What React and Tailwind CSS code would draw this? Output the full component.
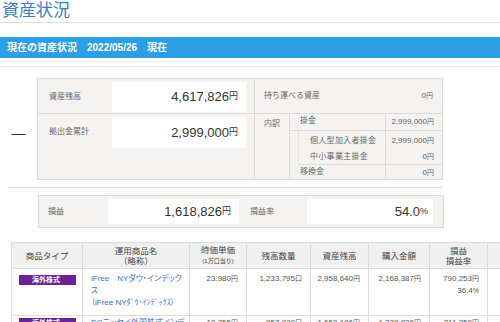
export default function App() {
  const font = "font-['Liberation_Sans','Noto_Sans_CJK_JP',sans-serif]";
  const yen = (v, size = "text-[9px]") => (
    <>
      {v}
      <span className={size}>円</span>
    </>
  );

  return (
    <div className={`w-[500px] h-[322px] overflow-hidden bg-white text-[#555] ${font}`}>
      {/* title */}
      <h1 className="pl-[2px] pt-[1px] h-[23px] text-[17px] leading-[20px] text-[#3a7fc0] border-b border-[#dcdcdc]">
        資産状況
      </h1>

      {/* blue bar */}
      <div className="mt-[14px] h-[21px] bg-[#2d9fe6] pl-[7px] flex items-center text-white text-[10px] font-bold">
        現在の資産状況　2022/05/26　現在
      </div>
      <div className="mt-[8px] h-px bg-[#e6e6e6]" />

      {/* balance summary */}
      <div className="mt-[11px] flex">
        <div className="w-[37px] flex items-center justify-center pt-[8px] text-[14px] text-[#333]">—</div>
        <div className="w-[406px] border border-[#d9d9d9] bg-[#f4f3f1] flex">
          <div className="w-[217px] border-r border-[#dcdcdc]">
            <div className="h-[35px] flex border-b border-[#dcdcdc]">
              <div className="w-[74px] pl-[11px] pt-[13px] text-[8px] leading-[10px] text-[#666]">資産残高</div>
              <div className="mt-[3px] h-[30px] w-[134px] bg-white flex items-center justify-end pr-[8px] text-[13px] text-[#333]">
                {yen("4,617,826")}
              </div>
            </div>
            <div className="h-[65px] flex">
              <div className="w-[74px] pl-[11px] pt-[13px] text-[8px] leading-[10px] text-[#666]">拠出金累計</div>
              <div className="mt-[3px] h-[31px] w-[134px] bg-white flex items-center justify-end pr-[8px] text-[13px] text-[#333]">
                {yen("2,999,000")}
              </div>
            </div>
          </div>
          <div className="flex-1 text-[8px] text-[#666]">
            <div className="h-[35px] flex items-center justify-between px-[9px] border-b border-[#dcdcdc]">
              <span>持ち運べる資産</span>
              <span>{yen("0", "text-[7px]")}</span>
            </div>
            <div className="h-[65px] flex">
              <div className="w-[35px] border-r border-[#dcdcdc] text-center pt-[4px] leading-[12px]">内訳</div>
              <div className="flex-1 flex flex-col leading-[12px]">
                <div className="h-[17px] flex border-b border-[#dcdcdc]">
                  <span className="flex-1 pl-[10px] pt-[1px]">掛金</span>
                  <span className="w-[57px] border-l border-[#dcdcdc] text-right pr-[8px] pt-[2px]">{yen("2,999,000", "text-[7px]")}</span>
                </div>
                <div className="h-[34px] ml-[8px] border-l border-[#e2e2e2] flex flex-col border-b border-b-[#dcdcdc]">
                  <div className="h-[18px] flex">
                    <span className="flex-1 whitespace-nowrap pl-[11px] pt-[4px] text-[8px] tracking-[0.3px]">個人型加入者掛金</span>
                    <span className="w-[57px] border-l border-[#dcdcdc] text-right pr-[8px] pt-[4px]">{yen("2,999,000", "text-[7px]")}</span>
                  </div>
                  <div className="h-[15px] flex">
                    <span className="flex-1 whitespace-nowrap pl-[11px] pt-[2px] text-[8px] tracking-[0.3px]">中小事業主掛金</span>
                    <span className="w-[57px] border-l border-[#dcdcdc] text-right pr-[8px] pt-[2px]">{yen("0", "text-[7px]")}</span>
                  </div>
                </div>
                <div className="flex-1 flex">
                  <span className="flex-1 pl-[10px] pt-[1px]">移換金</span>
                  <span className="w-[57px] border-l border-[#dcdcdc] text-right pr-[8px] pt-[2px]">{yen("0", "text-[7px]")}</span>
                </div>
              </div>
            </div>
          </div>
        </div>
      </div>
      <div className="ml-[8px] mt-[7px] w-[435px] h-px bg-[#dcdcdc]" />

      {/* profit */}
      <div className="ml-[38px] mt-[7px] w-[406px] h-[33px] border border-[#d9d9d9] bg-[#f4f3f1] flex items-center">
        <div className="w-[69px] pl-[9px] text-[8px] text-[#666]">損益</div>
        <div className="w-[131px] h-[25px] bg-white flex items-center justify-end pr-[8px] text-[13px] text-[#333]">
          {yen("1,618,826")}
        </div>
        <div className="w-[68px] pl-[11px] text-[8px] text-[#666]">損益率</div>
        <div className="w-[126px] h-[25px] bg-white flex items-center justify-end pr-[5px] text-[13px] text-[#333]">
          54.0<span className="text-[9px]">%</span>
        </div>
      </div>

      {/* holdings table */}
      <table className="ml-[11px] mt-[14px] w-[536px] table-fixed border-collapse text-[8px] leading-[12px]">
        <colgroup>
          <col className="w-[71px]" />
          <col className="w-[107px]" />
          <col className="w-[57px]" />
          <col className="w-[64px]" />
          <col className="w-[58px]" />
          <col className="w-[61px]" />
          <col className="w-[58px]" />
          <col className="w-[60px]" />
        </colgroup>
        <thead>
          <tr className="h-[26px] bg-[#f0f0f0] text-[#444] text-[8.5px]">
            <th className="border border-[#dcdcdc] font-normal">商品タイプ</th>
            <th className="border border-[#dcdcdc] font-normal leading-[10px]">
              運用商品名
              <br />（略称）
            </th>
            <th className="border border-[#dcdcdc] font-normal leading-[10px]">
              時価単価
              <br />
              <span className="text-[6px]">(1万口当り)</span>
            </th>
            <th className="border border-[#dcdcdc] font-normal">残高数量</th>
            <th className="border border-[#dcdcdc] font-normal">資産残高</th>
            <th className="border border-[#dcdcdc] font-normal">購入金額</th>
            <th className="border border-[#dcdcdc] font-normal leading-[10px]">
              損益
              <br />
              損益率
            </th>
            <th className="border border-[#dcdcdc] font-normal"></th>
          </tr>
        </thead>
        <tbody>
          <tr className="h-[47px] align-top">
            <td className="border border-[#dcdcdc] pl-[7px] pt-[6px]">
              <div className="w-[57px] h-[10px] bg-[#6a2497] text-white text-[7px] leading-[10px] font-bold pl-[13px]">海外株式</div>
            </td>
            <td className="border border-[#dcdcdc] pl-[8px] pr-[4px] pt-[4px] text-[#3f6fc6] text-[8px] [font-feature-settings:'palt']">
              iFree　NYダウ・インデックス
              <br />
              <span className="whitespace-nowrap">（iFree NYﾀﾞｳ･ｲﾝﾃﾞｯｸｽ）</span>
            </td>
            <td className="border border-[#dcdcdc] text-right pr-[8px] pt-[4px]">{yen("23,980", "text-[7px]")}</td>
            <td className="border border-[#dcdcdc] text-right pr-[8px] pt-[4px]">
              1,233,795<span className="text-[7px]">口</span>
            </td>
            <td className="border border-[#dcdcdc] text-right pr-[8px] pt-[4px]">{yen("2,958,640", "text-[7px]")}</td>
            <td className="border border-[#dcdcdc] text-right pr-[8px] pt-[4px]">{yen("2,168,387", "text-[7px]")}</td>
            <td className="border border-[#dcdcdc] text-right pr-[8px] pt-[4px]">
              {yen("790,253", "text-[7px]")}
              <br />
              36.4<span className="text-[7px]">%</span>
            </td>
            <td className="border border-[#dcdcdc]"></td>
          </tr>
          <tr className="h-[47px] align-top">
            <td className="border border-[#dcdcdc] pl-[7px] pt-[2px]">
              <div className="w-[57px] h-[10px] bg-[#6a2497] text-white text-[7px] leading-[10px] font-bold pl-[13px]">海外株式</div>
            </td>
            <td className="border border-[#dcdcdc] pl-[8px] pr-[4px] pt-[1px] text-[#3f6fc6] text-[8px] [font-feature-settings:'palt']">
              DCニッセイ外国株式インデックス
            </td>
            <td className="border border-[#dcdcdc] text-right pr-[8px] pt-[1px]">{yen("10,355", "text-[7px]")}</td>
            <td className="border border-[#dcdcdc] text-right pr-[8px] pt-[1px]">
              857,930<span className="text-[7px]">口</span>
            </td>
            <td className="border border-[#dcdcdc] text-right pr-[8px] pt-[1px]">{yen("1,650,186", "text-[7px]")}</td>
            <td className="border border-[#dcdcdc] text-right pr-[8px] pt-[1px]">{yen("1,338,836", "text-[7px]")}</td>
            <td className="border border-[#dcdcdc] text-right pr-[8px] pt-[1px]">{yen("311,350", "text-[7px]")}</td>
            <td className="border border-[#dcdcdc]"></td>
          </tr>
        </tbody>
      </table>
    </div>
  );
}
